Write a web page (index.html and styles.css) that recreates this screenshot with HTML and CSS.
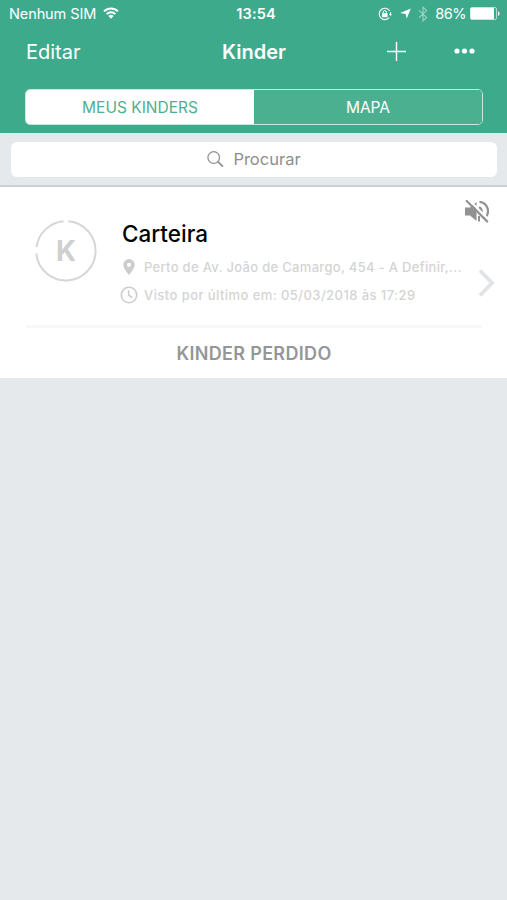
FILE: index.html
```html
<!DOCTYPE html>
<html lang="pt-BR">
<head>
  <meta charset="UTF-8">
  <meta name="viewport" content="width=device-width, initial-scale=1">
  <title>Kinder</title>
  <link rel="stylesheet" href="styles.css">
</head>
<body>
  <header class="header">
    <div class="status-bar">
      <div class="status-left">
        <span class="carrier">Nenhum SIM</span>
        <svg class="wifi" width="16" height="12" viewBox="0 0 16 12" fill="none" stroke="#fff" stroke-width="1.9">
          <path d="M1 4.4a10 10 0 0 1 14 0"/>
          <path d="M3.6 7.1a6.2 6.2 0 0 1 8.8 0"/>
          <path d="M8 11.7L5.4 9a3.7 3.7 0 0 1 5.2 0z" fill="#fff" stroke="none"/>
        </svg>
      </div>
      <span class="clock">13:54</span>
      <div class="status-right">
        <svg class="lock" width="14" height="14" viewBox="0 0 14 14" fill="none" stroke="#fff">
          <path d="M11.2 10.7A5.7 5.7 0 1 1 11.7 3.8" stroke-width="1.1"/>
          <path d="M12.5 5.2v2.6" stroke-width="1.1"/>
          <path d="M11 7h3l-1.5 2z" fill="#fff" stroke="none"/>
          <rect x="4.1" y="6.2" width="5.4" height="4" fill="#fff" stroke="none"/>
          <path d="M5.2 6.4V5.2a1.6 1.6 0 0 1 3.2 0v1.2" stroke-width="1"/>
        </svg>
        <svg class="location" width="11" height="11" viewBox="0 0 11 11" fill="#fff">
          <path d="M10.8.4L6.800 10.500 5.600 6 .2 4.900z"/>
        </svg>
        <svg class="bluetooth" width="10" height="16" viewBox="0 0 10 16" fill="none" stroke="#fff" stroke-width="1.1">
          <path d="M1 4.4l7.6 7L5 14.8V1.2l3.6 3.4L1 11.6"/>
        </svg>
        <span class="percent">86%</span>
        <svg class="battery" width="30" height="13" viewBox="0 0 30 13">
          <rect x=".5" y=".5" width="26" height="12" rx="1.5" fill="none" stroke="#fff" stroke-opacity=".6"/>
          <rect x=".5" y=".7" width="23.5" height="11.6" rx="1" fill="#fff"/>
          <path d="M28 4.2c2 .8 2 3.8 0 4.6z" fill="#fff"/>
        </svg>
      </div>
    </div>

    <div class="nav-bar">
      <span class="edit">Editar</span>
      <h1 class="title">Kinder</h1>
      <div class="actions">
        <svg width="19" height="19" viewBox="0 0 19 19" stroke="#fff" stroke-width="1.4">
          <path d="M9.5 0v19M0 9.5h19"/>
        </svg>
        <svg width="21" height="6" viewBox="0 0 21 6" fill="#fff">
          <circle cx="3" cy="3" r="2.6"/>
          <circle cx="10.5" cy="3" r="2.6"/>
          <circle cx="18" cy="3" r="2.6"/>
        </svg>
      </div>
    </div>

    <div class="tabs">
      <span class="tab active">MEUS KINDERS</span>
      <span class="tab">MAPA</span>
    </div>
  </header>

  <div class="search-bar">
    <div class="search-field">
      <svg width="17" height="17" viewBox="0 0 17 17" fill="none" stroke="#929292">
        <circle cx="6.7" cy="6.5" r="5.8" stroke-width="1.3"/>
        <path d="M10.9 10.7l5 5" stroke-width="1.9"/>
      </svg>
      <span class="placeholder">Procurar</span>
    </div>
  </div>

  <section class="card">
    <svg class="muted" width="24" height="23" viewBox="0 0 24 23" fill="none" stroke="#929292" stroke-width="2.2">
      <path d="M0 7.5h5l6.5-5.500v19l-6.500-5.500H0z" fill="#929292" stroke="none"/>
      <path d="M14.500 1.800a9.300 9.300 0 0 1 5 16.500"/>
      <path d="M14 7.300a4.700 4.700 0 0 1 2.600 5"/>
      <path d="M14 16v5.500" stroke-width="2"/>
      <path d="M2.800-1.200l23 23" stroke="#fff" stroke-width="2"/>
      <path d="M1 .3l21.800 21.800"/>
    </svg>

    <div class="card-main">
      <div class="avatar">
        <svg class="ring" width="62" height="62" viewBox="0 0 62 62" fill="none" stroke="#d6d6d6" stroke-width="2">
          <path d="M33.5 1.200A29.700 29.700 0 1 1 1.300 33.500"/>
          <path d="M1.500 27A30 30 0 0 1 28.500 1.200"/>
        </svg>
        <span class="letter">K</span>
      </div>
      <div class="info">
        <h2 class="name">Carteira</h2>
        <div class="info-row">
          <svg width="18" height="18" viewBox="0 0 18 18">
            <path d="M9 1a5.7 5.7 0 0 0-5.7 5.7C3.3 10.7 9 17 9 17s5.7-6.3 5.7-10.3A5.7 5.7 0 0 0 9 1zm0 3.7a2.1 2.1 0 1 1 0 4.2 2.1 2.1 0 0 1 0-4.2z" fill="#cdcdcd" fill-rule="evenodd"/>
          </svg>
          <span class="place">Perto de Av. João de Camargo, 454 - A Definir,...</span>
        </div>
        <div class="info-row">
          <svg width="18" height="18" viewBox="0 0 18 18" fill="none" stroke="#cdcdcd" stroke-width="1.6">
            <circle cx="9" cy="9" r="7.7"/>
            <path d="M8.7 4.3v5l3.6 2.2"/>
          </svg>
          <span class="seen">Visto por último em: 05/03/2018 às 17:29</span>
        </div>
      </div>
      <svg class="chevron" width="17" height="28" viewBox="0 0 17 28" fill="none" stroke="#e1e3e4" stroke-width="3.8">
        <path d="M2 1.500L14 14 2 26.500"/>
      </svg>
    </div>

    <div class="card-footer"><span>KINDER PERDIDO</span></div>
  </section>
</body>
</html>
```
FILE: styles.css
```css
* {
  box-sizing: border-box;
}
body {
  margin: 0;
  min-height: 100vh;
  background: #e5e9ec;
  font-family: Inter, "Liberation Sans", sans-serif;
  color: #000;
}
svg {
  display: block;
  flex: none;
}
span, h1, h2 {
  white-space: nowrap;
}
.header {
  height: 133px;
  background: #3eaa8c;
  color: #fff;
}
.status-bar {
  display: grid;
  grid-template-columns: 1fr auto 1fr;
  align-items: center;
  height: 27px;
  padding: 0 7px 0 9px;
  font-size: 14.5px;
}
.status-left, .status-right {
  display: flex;
  align-items: center;
}
.carrier {
  letter-spacing: -0.1px;
}
.wifi {
  margin: -1px 0 0 7px;
}
.clock {
  padding-left: 3px;
  font-weight: 600;
  letter-spacing: 0.15px;
}
.status-right {
  justify-content: flex-end;
}
.location {
  margin-left: 8px;
}
.bluetooth {
  margin: 0 7px 0 7px;
  opacity: 0.5;
}
.percent {
  letter-spacing: -0.5px;
}
.battery {
  margin-left: 4px;
}
.nav-bar {
  display: grid;
  grid-template-columns: 1fr auto 1fr;
  align-items: center;
  height: 50px;
  padding: 0 32px 0 26px;
}
.edit {
  font-size: 20px;
}
.title {
  margin: 0;
  padding-left: 7px;
  font-size: 20px;
  font-weight: 600;
}
.actions {
  display: flex;
  align-items: center;
  justify-content: flex-end;
  gap: 48px;
  padding-bottom: 2px;
}
.tabs {
  display: flex;
  height: 36px;
  margin: 12px 24px 0 25px;
  border: 1.5px solid #c9e8de;
  border-radius: 5px;
  overflow: hidden;
}
.tab {
  flex: 1;
  display: flex;
  align-items: center;
  justify-content: center;
  background: #4bb090;
  font-size: 15.5px;
}
.tab.active {
  background: #fff;
  color: #4bb090;
}
.search-bar {
  height: 54px;
  padding: 9px 10px 0 11px;
  background: #e5e9ec;
  border-bottom: 2px solid #cdd0d3;
}
.search-field {
  display: flex;
  align-items: center;
  justify-content: center;
  gap: 9px;
  height: 35px;
  background: #fff;
  border-radius: 6px;
  color: #8e8e8e;
  font-size: 16.5px;
}
.placeholder {
  padding-bottom: 1px;
}
.card {
  position: relative;
  height: 191px;
  background: #fff;
}
.muted {
  position: absolute;
  top: 13px;
  right: 18px;
}
.card-main {
  display: flex;
  height: 138px;
  padding: 33px 12px 0 35px;
}
.avatar {
  display: grid;
  place-items: center;
  width: 62px;
  height: 62px;
  margin-right: 24px;
}
.ring, .letter {
  grid-area: 1 / 1;
}
.letter {
  color: #cfcfcf;
  font-size: 28px;
  font-weight: 700;
}
.info {
  flex: 1;
  min-width: 0;
}
.name {
  margin: 0 0 5px 1px;
  font-size: 22.5px;
  font-weight: 500;
  line-height: 28px;
}
.info-row {
  display: flex;
  align-items: center;
  gap: 6px;
  height: 28px;
  margin-left: -1px;
  color: #d4d4d4;
  font-size: 13px;
  font-weight: 500;
}
.place {
  letter-spacing: 0.31px;
}
.seen {
  letter-spacing: 0.43px;
}
.chevron {
  margin-top: 49px;
}
.card-footer {
  display: flex;
  align-items: center;
  justify-content: center;
  height: 53px;
  margin: 0 25px 0 26px;
  border-top: 3px solid #f7f8f8;
  color: #969696;
  font-size: 18px;
  font-weight: 600;
  letter-spacing: 0.33px;
}
```
